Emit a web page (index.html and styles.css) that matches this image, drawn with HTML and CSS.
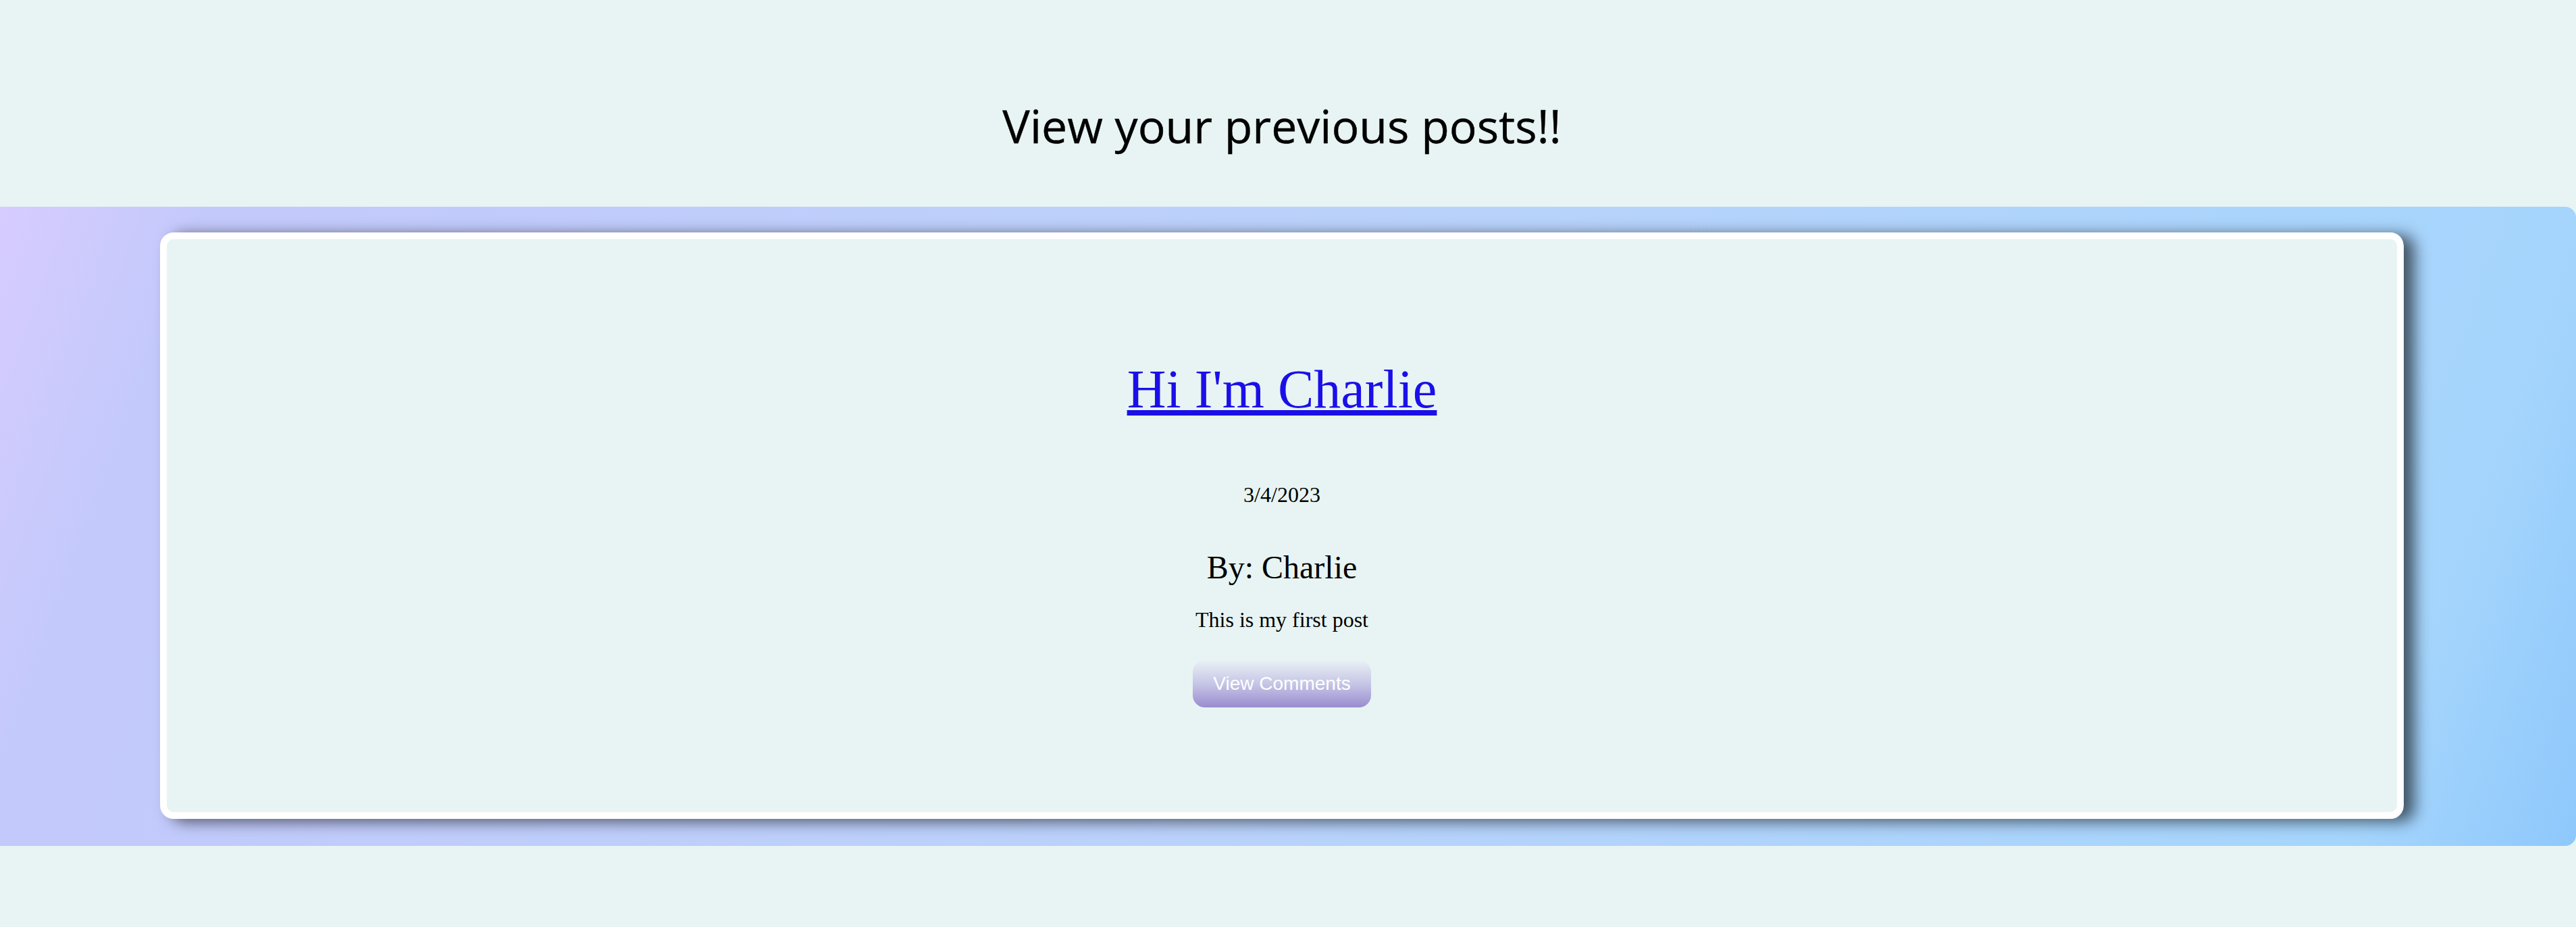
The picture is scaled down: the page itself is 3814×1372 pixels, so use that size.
FILE: index.html
```html
<!DOCTYPE html>
<html lang="en">
<head>
<meta charset="utf-8">
<title>Previous posts</title>
<link rel="stylesheet" href="styles.css">
</head>
<body>
<main class="page">
  <h1 class="page-title">View your previous posts!!</h1>
  <section class="posts-band">
    <article class="post-card">
      <h2 class="post-title"><a href="#">Hi I'm Charlie</a></h2>
      <p class="post-date">3/4/2023</p>
      <h3 class="post-author">By: Charlie</h3>
      <p class="post-body">This is my first post</p>
      <button class="comments-btn" type="button">View Comments</button>
    </article>
  </section>
</main>
</body>
</html>
```
FILE: styles.css
```css
html, body {
  margin: 0;
  padding: 0;
  background: #e7f4f3;
}

.page {
  margin-left: -18px;
  width: calc(100% + 18px);
}

.page-title {
  margin: 0;
  padding-top: 140px;
  font-family: "Open Sans", "Noto Sans", sans-serif;
  font-size: 68px;
  font-weight: 400;
  line-height: 92px;
  text-align: center;
  color: #000;
  -webkit-text-stroke: 0.4px #000;
}

.posts-band {
  margin-top: 74px;
  padding: 38px 255px 40px;
  border-radius: 16px;
  background: linear-gradient(110deg, #d8ccff 0%, #c3c9fb 8%, #bad2fb 50%, #a5d5fc 92%, #8ec8fc 100%);
}

.post-card {
  display: flex;
  flex-direction: column;
  align-items: center;
  padding: 176px 0 155px;
  border: 10px solid #fff;
  border-radius: 20px;
  background: #e7f4f3;
  box-shadow: 16px 4px 22px rgba(0, 0, 0, 0.6);
  font-family: "Liberation Serif", "Times New Roman", serif;
  color: #000;
}

.post-title {
  margin: 0;
  font-size: 80px;
  font-weight: 400;
  line-height: 92px;
}

.post-title a {
  color: #1b0fe9;
}

.post-date {
  margin: 92px 0 0;
  font-size: 32px;
  line-height: 37px;
}

.post-author {
  margin: 61px 0 0;
  font-size: 48px;
  font-weight: 400;
  line-height: 55px;
}

.post-body {
  margin: 32px 0 0;
  font-size: 32px;
  line-height: 37px;
}

.comments-btn {
  margin-top: 41px;
  width: 264px;
  height: 70px;
  padding: 0;
  border: none;
  border-radius: 18px;
  background: linear-gradient(to bottom, #e9f1f4 0%, #c6c6e6 50%, #9a8ccf 100%);
  color: #fff;
  font-family: "Liberation Sans", Arial, sans-serif;
  font-size: 28px;
  cursor: pointer;
}
```
